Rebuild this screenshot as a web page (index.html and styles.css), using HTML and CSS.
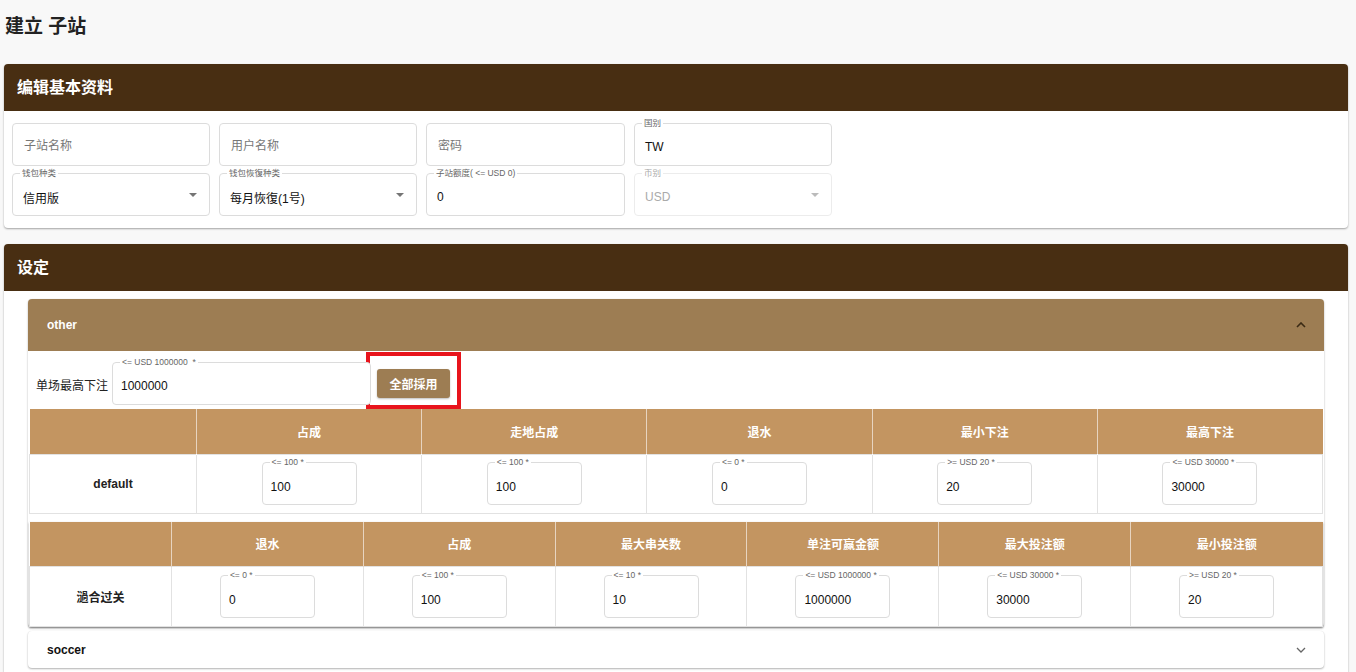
FILE: index.html
```html
<!DOCTYPE html>
<html lang="zh">
<head>
<meta charset="utf-8">
<title>建立 子站</title>
<link rel="stylesheet" href="styles.css">
</head>
<body>
<div class="page">
  <h1 class="title">建立 子站</h1>

  <section class="card">
    <div class="card-head">编辑基本资料</div>
    <div class="card-body">
      <div class="form-grid">
        <div class="field"><span class="placeholder">子站名称</span></div>
        <div class="field"><span class="placeholder">用户名称</span></div>
        <div class="field"><span class="placeholder">密码</span></div>
        <div class="field"><span class="flabel">国别</span><span class="value">TW</span></div>
        <div class="field select"><span class="flabel">钱包种类</span><span class="value">信用版</span><span class="caret"></span></div>
        <div class="field select"><span class="flabel">钱包恢復种类</span><span class="value">每月恢復(1号)</span><span class="caret"></span></div>
        <div class="field"><span class="flabel">子站额度( &lt;= USD 0)</span><span class="value">0</span></div>
        <div class="field select disabled"><span class="flabel">币别</span><span class="value">USD</span><span class="caret"></span></div>
      </div>
    </div>
  </section>

  <section class="card card-settings">
    <div class="card-head">设定</div>
    <div class="card-body settings-body">
      <div class="acc">
        <div class="acc-head open">
          <span>other</span>
          <svg class="chev" width="10" height="6" viewBox="0 0 10 6"><polyline points="1,5 5,1 9,5" fill="none" stroke="#3a2a14" stroke-width="1.6"/></svg>
        </div>
        <div class="acc-body">
          <div class="max-row">
            <span class="max-label">单场最高下注</span>
            <div class="field wide"><span class="flabel">&lt;= USD 1000000 &nbsp;*</span><span class="value">1000000</span></div>
            <div class="mark"><button class="btn">全部採用</button></div>
          </div>

          <table class="grid t1">
            <colgroup><col class="c-first1"><col><col><col><col><col></colgroup>
            <thead>
              <tr><th></th><th>占成</th><th>走地占成</th><th>退水</th><th>最小下注</th><th>最高下注</th></tr>
            </thead>
            <tbody>
              <tr>
                <td class="rowname">default</td>
                <td><div class="field small"><span class="flabel">&lt;= 100 *</span><span class="value">100</span></div></td>
                <td><div class="field small"><span class="flabel">&lt;= 100 *</span><span class="value">100</span></div></td>
                <td><div class="field small"><span class="flabel">&lt;= 0 *</span><span class="value">0</span></div></td>
                <td><div class="field small"><span class="flabel">&gt;= USD 20 *</span><span class="value">20</span></div></td>
                <td><div class="field small"><span class="flabel">&lt;= USD 30000 *</span><span class="value">30000</span></div></td>
              </tr>
            </tbody>
          </table>

          <table class="grid t2">
            <colgroup><col class="c-first2"><col><col><col><col><col><col></colgroup>
            <thead>
              <tr><th></th><th>退水</th><th>占成</th><th>最大串关数</th><th>单注可赢金额</th><th>最大投注额</th><th>最小投注额</th></tr>
            </thead>
            <tbody>
              <tr>
                <td class="rowname">濄合过关</td>
                <td><div class="field small"><span class="flabel">&lt;= 0 *</span><span class="value">0</span></div></td>
                <td><div class="field small"><span class="flabel">&lt;= 100 *</span><span class="value">100</span></div></td>
                <td><div class="field small"><span class="flabel">&lt;= 10 *</span><span class="value">10</span></div></td>
                <td><div class="field small"><span class="flabel">&lt;= USD 1000000 *</span><span class="value">1000000</span></div></td>
                <td><div class="field small"><span class="flabel">&lt;= USD 30000 *</span><span class="value">30000</span></div></td>
                <td><div class="field small"><span class="flabel">&gt;= USD 20 *</span><span class="value">20</span></div></td>
              </tr>
            </tbody>
          </table>
        </div>
      </div>

      <div class="acc closed">
        <div class="acc-head">
          <span>soccer</span>
          <svg class="chev" width="10" height="6" viewBox="0 0 10 6"><polyline points="1,1 5,5 9,1" fill="none" stroke="#666" stroke-width="1.3"/></svg>
        </div>
      </div>
    </div>
  </section>
</div>
</body>
</html>
```

FILE: styles.css
```css
* { box-sizing: border-box; }

html, body {
  margin: 0;
  padding: 0;
  background: #f8f8f8;
  font-family: "Liberation Sans", "Noto Sans CJK SC", sans-serif;
  color: #222;
  overflow: hidden;
}

.page {
  padding: 0 8px 0 4px;
}

.title {
  margin: 0;
  padding: 14px 0 0 1px;
  height: 64px;
  font-size: 19px;
  line-height: 26px;
  font-weight: bold;
  color: #222;
}

.card {
  background: #fff;
  border-radius: 4px;
  box-shadow: 0 1px 2px rgba(0, 0, 0, 0.35);
  overflow: hidden;
}

.card-head {
  height: 47px;
  background: #482e12;
  color: #fff;
  font-size: 16px;
  font-weight: bold;
  line-height: 47px;
  padding-left: 13px;
}

.card-body {
  padding: 12px 8px;
}

.form-grid {
  display: grid;
  grid-template-columns: 198px 198px 199px 198px;
  column-gap: 9px;
  row-gap: 7px;
}

.field {
  position: relative;
  height: 43px;
  border: 1px solid #dcdcdc;
  border-radius: 4px;
  background: #fff;
  display: flex;
  align-items: center;
  padding: 5px 11px 0 10px;
  font-size: 12px;
}

.placeholder {
  color: #777;
  margin-top: -5px;
  padding-left: 1px;
}

.value {
  flex: 1;
  color: #111;
}

.flabel {
  position: absolute;
  top: -6px;
  left: 7px;
  padding: 0 2px;
  background: #fff;
  font-size: 8.5px;
  line-height: 10px;
  color: #666;
  white-space: nowrap;
}

.caret {
  width: 0;
  height: 0;
  border-left: 4px solid transparent;
  border-right: 4px solid transparent;
  border-top: 4px solid #757575;
  margin-right: 1px;
  margin-top: -5px;
}

.disabled {
  border-color: #ececec;
}
.disabled .value { color: #aaa; }
.disabled .flabel { color: #aaa; }
.disabled .caret { border-top-color: #bbb; }

.card-settings {
  margin-top: 16px;
  border-radius: 4px 4px 0 0;
  height: 428px;
}

.settings-body {
  padding: 8px 24px;
}

.acc {
  background: #fff;
  border-radius: 4px;
  box-shadow: 0 1px 2px rgba(0, 0, 0, 0.3), 0 0 1px rgba(0, 0, 0, 0.08);
}

.acc-head {
  height: 52px;
  display: flex;
  align-items: center;
  justify-content: space-between;
  padding: 0 18px 0 19px;
  font-size: 12px;
  font-weight: bold;
  color: #111;
}

.acc-head.open {
  background: #9d7d53;
  color: #fff;
  border-radius: 4px 4px 0 0;
}

.acc.closed {
  margin-top: 4px;
}
.acc.closed .acc-head {
  height: 37px;
}

.acc-body {
  padding: 0 1px;
}

.max-row {
  height: 58px;
  display: flex;
  align-items: flex-start;
  padding-left: 7px;
}

.max-label {
  font-size: 12px;
  color: #222;
  margin-top: 25px;
  width: 76px;
}

.field.wide {
  width: 259px;
  margin-top: 11px;
  padding-left: 8px;
}

.mark {
  margin-top: 1px;
  margin-left: -5px;
  width: 95px;
  height: 57px;
  border: 4px solid #e8141c;
  display: flex;
  align-items: center;
  justify-content: center;
  padding-top: 6px;
}

.btn {
  width: 73px;
  height: 29px;
  border: none;
  border-radius: 3px;
  background: #9d7d53;
  color: #fff;
  font-family: inherit;
  font-size: 12px;
  font-weight: bold;
  box-shadow: 0 1px 2px rgba(0, 0, 0, 0.25);
}

.grid {
  width: 100%;
  border-collapse: collapse;
  table-layout: fixed;
  font-size: 12px;
}

.grid.t2 {
  margin-top: 8px;
  box-shadow: 0 1px 2px rgba(0, 0, 0, 0.35);
}

.c-first1 { width: 167px; }
.c-first2 { width: 142px; }

.grid th {
  height: 45px;
  background: #c39561;
  color: #fff;
  font-weight: bold;
  border-left: 1px solid rgba(255, 255, 255, 0.6);
  padding: 0;
}
.grid th:first-child { border-left: none; }

.grid td {
  height: 59px;
  border: 1px solid #e2e2e2;
  text-align: center;
  padding: 0;
}
.t2 td { height: 60px; }

.rowname {
  font-weight: bold;
  color: #222;
}

.field.small {
  display: inline-flex;
  width: 95px;
  text-align: left;
  vertical-align: middle;
  padding-left: 8px;
  padding-top: 6px;
}
```
